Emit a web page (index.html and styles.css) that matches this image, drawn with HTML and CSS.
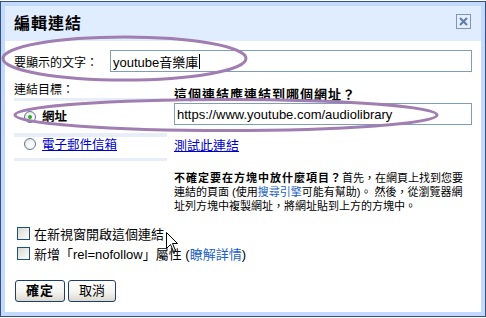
FILE: index.html
```html
<!DOCTYPE html>
<html lang="zh-Hant">
<head>
    <meta charset="UTF-8">
    <title>編輯連結</title>
    <link rel="stylesheet" href="styles.css">
</head>
<body>
    <div class="dialog">
        <div class="titlebar">
            <span class="title">編輯連結</span>
            <span class="close">
                <svg width="9" height="9" viewBox="0 0 9 9"><path d="M1 1 L8 8 M8 1 L1 8" stroke="#5b7cab" stroke-width="2"/></svg>
            </span>
        </div>

        <div class="content">
            <div class="text-row">
                <label>要顯示的文字：</label>
                <div class="field">youtube音樂庫<span class="caret"></span></div>
            </div>

            <div class="target">
                <div class="target-side">
                    <div class="side-label">連結目標：</div>
                    <ul class="tabs">
                        <li class="tab tab-on"><span class="radio radio-on"></span><b>網址</b></li>
                        <li class="tab tab-off"><span class="radio"></span><a class="plain-link" href="#">電子郵件信箱</a></li>
                    </ul>
                </div>

                <div class="target-main">
                    <div class="main-head">這個連結應連結到哪個網址？</div>
                    <div class="field">https://www.youtube.com/audiolibrary</div>
                    <div class="test-row"><a class="plain-link" href="#">測試此連結</a></div>
                    <p class="hint">
                        <b>不確定要在方塊中放什麼項目？</b>首先，在網頁上找到您要<br>
                        連結的頁面 (使用<a href="#">搜尋引擎</a>可能有幫助)。 然後，從瀏覽器網<br>
                        址列方塊中複製網址，將網址貼到上方的方塊中。
                    </p>
                </div>
            </div>

            <div class="options">
                <div class="check"><span class="box"></span>在新視窗開啟這個連結</div>
                <div class="check"><span class="box"></span>新增「rel=nofollow」屬性 (<a class="soft-link" href="#">瞭解詳情</a>)</div>
            </div>

            <div class="buttons">
                <button class="btn btn-ok">確定</button>
                <button class="btn">取消</button>
            </div>
        </div>
    </div>

    <!-- annotation rings drawn over the dialog -->
    <svg class="marks" width="486" height="318" viewBox="0 0 486 318">
        <ellipse cx="124.5" cy="58.5" rx="121.5" ry="21.5" fill="none" stroke="#a17eb1" stroke-width="3"/>
        <ellipse cx="226" cy="115" rx="211" ry="15.5" fill="none" stroke="#a17eb1" stroke-width="3"/>
    </svg>

    <svg class="pointer" width="13" height="21" viewBox="0 0 13 21">
        <path d="M0.5 0.5 V16.5 L4.5 12.5 L7.5 19.5 L9.5 18.5 L6.5 11.5 H11.5 Z" fill="#fff" stroke="#000"/>
    </svg>
</body>
</html>
```

FILE: styles.css
```css
* {
    margin: 0;
    padding: 0;
    box-sizing: border-box;
}

body {
    position: relative;
    width: 486px;
    height: 318px;
    overflow: hidden;
    background: #fff;
    color: #000;
    font-family: "Liberation Sans", "Noto Sans CJK TC", sans-serif;
    font-size: 13px;
}

.dialog {
    margin-top: 1px;
    width: 486px;
    height: 316px;
    border: 1px solid #34527a;
    background: #c3d9ff;
    padding: 4px;
    display: flex;
    flex-direction: column;
}

.titlebar {
    height: 35px;
    background: #e0ecff;
    display: flex;
    align-items: flex-start;
    justify-content: space-between;
    padding: 0 10px 0 9px;
}

.title {
    font-size: 16px;
    font-weight: 700;
    letter-spacing: 1px;
    line-height: 35px;
}

.close {
    width: 15px;
    height: 15px;
    margin-top: 8px;
    border: 1px solid #7a96bf;
    background: #e6eefc;
    display: flex;
    align-items: center;
    justify-content: center;
}

.content {
    flex: 1;
    background: #fff;
    padding: 9px 9px 0 9px;
}

.text-row {
    display: flex;
    align-items: center;
    height: 22px;
}

.text-row label {
    width: 96px;
    font-size: 12px;
}

.field {
    height: 22px;
    border: 1px solid #7f9db9;
    padding: 0 2px;
    display: flex;
    align-items: center;
    white-space: nowrap;
    font-size: 13px;
}

.text-row .field {
    flex: 1;
}

.caret {
    display: inline-block;
    width: 1px;
    height: 15px;
    margin-left: 1px;
    background: #000;
}

/* link target block */
.target {
    display: flex;
    gap: 7px;
    margin-top: 10px;
}

.target-side {
    width: 153px;
}

.side-label {
    font-size: 12px;
    line-height: 16px;
}

.tabs {
    list-style: none;
    background: #e8eef8;
    padding: 3px 0;
    display: flex;
    flex-direction: column;
    gap: 4px;
}

.tab {
    background: #fff;
    display: flex;
    align-items: center;
    padding-left: 10px;
    font-size: 12.5px;
    line-height: 14px;
}

.tab-on {
    height: 32px;
}

.tab-off {
    height: 21px;
    align-items: flex-start;
    padding-top: 1px;
}

.radio {
    width: 12px;
    height: 12px;
    margin-right: 6px;
    border-radius: 50%;
    border: 1px solid #5d7797;
    background: radial-gradient(circle at 65% 65%, #fff 20%, #dcdcd4 100%);
    display: flex;
    align-items: center;
    justify-content: center;
}

.radio-on::after {
    content: '';
    width: 4px;
    height: 4px;
    border-radius: 50%;
    background: #27a827;
}

.plain-link {
    color: #0000cc;
    text-decoration: underline;
}

.target-main {
    flex: 1;
}

.main-head {
    margin-top: 5px;
    font-weight: 700;
    letter-spacing: 1px;
    line-height: 16px;
}

.test-row {
    margin-top: 13px;
    line-height: 16px;
}

.hint {
    margin-top: 17px;
    font-size: 11px;
    line-height: 14px;
    white-space: nowrap;
}

.hint b {
    letter-spacing: 1px;
}

.hint a,
.soft-link {
    color: #1c5fc7;
    text-decoration: none;
}

/* checkboxes */
.options {
    margin-top: 14px;
    display: flex;
    flex-direction: column;
    gap: 4px;
}

.check {
    display: flex;
    align-items: flex-start;
    line-height: 16px;
}

.box {
    width: 13px;
    height: 13px;
    margin: 0 4px 0 3px;
    border: 1px solid #1c5180;
    background: linear-gradient(135deg, #d9d9d2, #fdfdfb);
}

.buttons {
    margin-top: 17px;
    padding-left: 1px;
    display: flex;
    gap: 3px;
}

.btn {
    height: 22px;
    padding: 0 10px;
    border: 1px solid #1e3f6a;
    border-radius: 3px;
    background: linear-gradient(#fff, #f4f4f0 55%, #dcd8cf);
    font-family: inherit;
    font-size: 13px;
    line-height: 20px;
    color: #000;
}

.btn-ok {
    font-weight: 700;
    letter-spacing: 1px;
}

/* overlays */
.marks {
    position: absolute;
    left: 0;
    top: 0;
    pointer-events: none;
}

.pointer {
    position: absolute;
    left: 166px;
    top: 232px;
}
```
